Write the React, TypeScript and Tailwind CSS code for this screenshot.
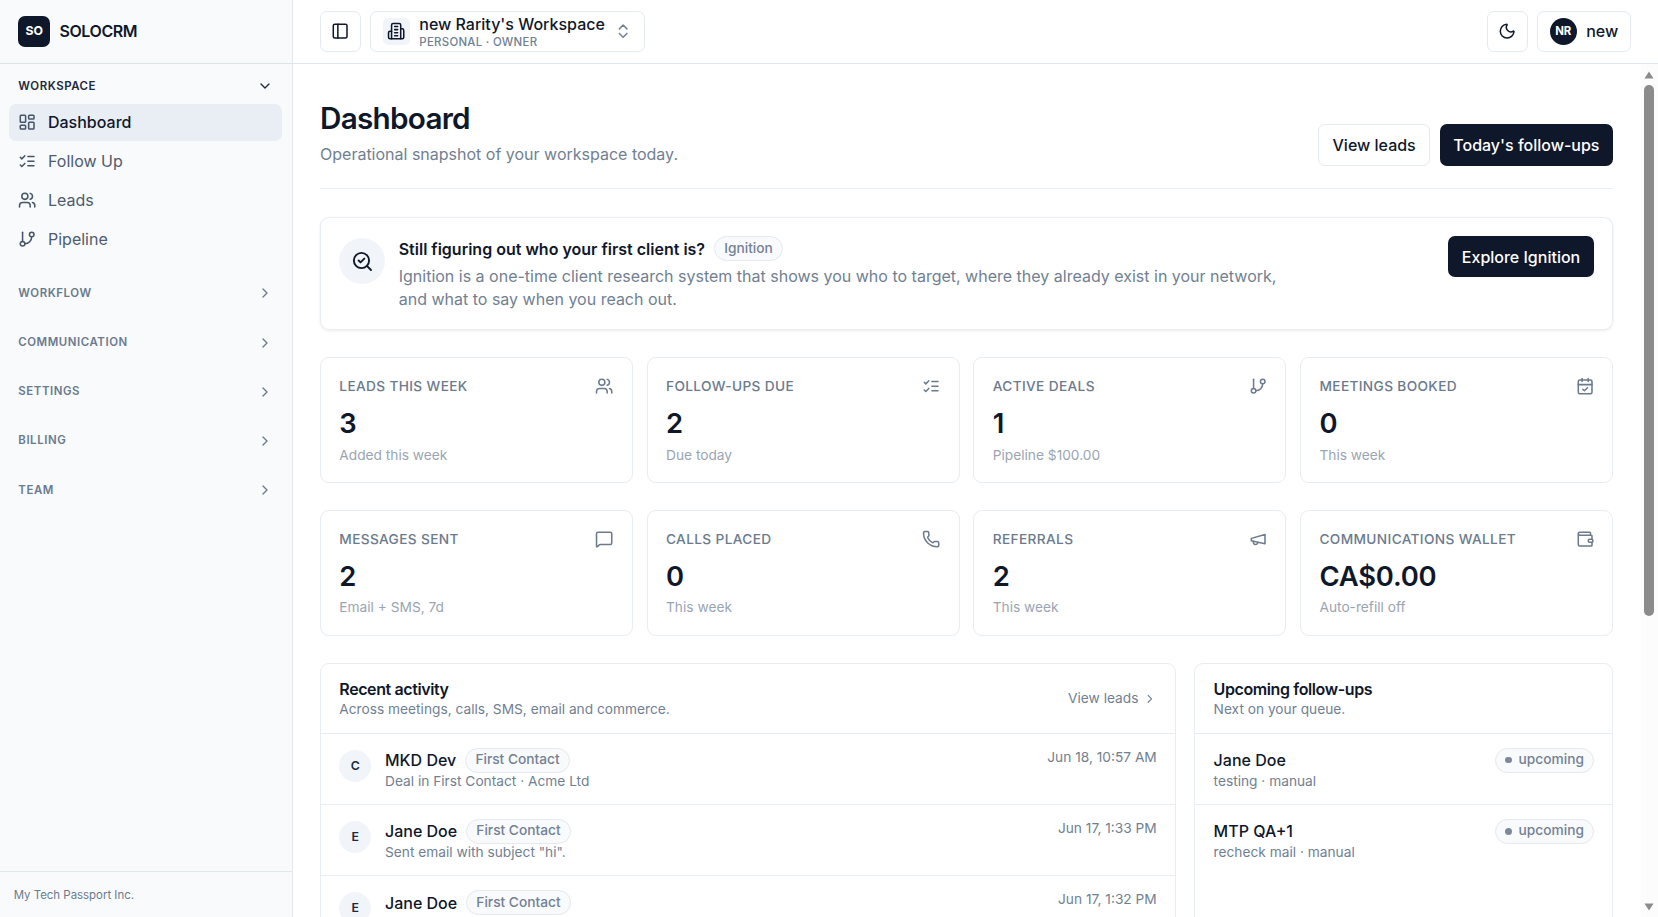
// App.tsx
import React from 'react';
import {
  CalendarCheck,
  ChevronDown,
  ChevronRight,
  ChevronsUpDown,
  GitBranch,
  LayoutDashboard,
  MessageSquare,
  Moon,
  PanelLeft,
  Phone,
  SearchCheck,
  Users,
} from 'lucide-react';

type IconType = React.ComponentType<{ className?: string }>;

interface Stat {
  label: string;
  value: string;
  hint: string;
  icon: IconType;
}

interface Activity {
  initial: string;
  name: string;
  detail: string;
  time: string;
}

const makeIcon = (paths: string[]): IconType => ({ className }) => (
  <svg
    xmlns="http://www.w3.org/2000/svg"
    className={className}
    viewBox="0 0 24 24"
    fill="none"
    stroke="currentColor"
    strokeWidth={2}
    strokeLinecap="round"
    strokeLinejoin="round"
  >
    {paths.map((d) => (
      <path key={d} d={d} />
    ))}
  </svg>
);

const BuildingIcon = makeIcon([
  'M6 22V4a2 2 0 0 1 2-2h8a2 2 0 0 1 2 2v18Z',
  'M6 12H4a2 2 0 0 0-2 2v6a2 2 0 0 0 2 2h2',
  'M18 9h2a2 2 0 0 1 2 2v9a2 2 0 0 1-2 2h-2',
  'M10 6h4',
  'M10 10h4',
  'M10 14h4',
  'M10 18h4',
]);

const ChecklistIcon = makeIcon(['m3 17 2 2 4-4', 'm3 7 2 2 4-4', 'M13 6h8', 'M13 12h8', 'M13 18h8']);

const MegaphoneIcon = makeIcon(['m3 11 18-5v12L3 14v-3z', 'M11.6 16.8a3 3 0 1 1-5.8-1.6']);

const WalletIcon = makeIcon([
  'M19 7V4a1 1 0 0 0-1-1H5a2 2 0 0 0 0 4h15a1 1 0 0 1 1 1v4h-3a2 2 0 0 0 0 4h3a1 1 0 0 0 1-1v-2a1 1 0 0 0-1-1',
  'M3 5v14a2 2 0 0 0 2 2h15a1 1 0 0 0 1-1v-4',
]);

const navItems: { label: string; icon: IconType }[] = [
  { label: 'Dashboard', icon: LayoutDashboard },
  { label: 'Follow Up', icon: ChecklistIcon },
  { label: 'Leads', icon: Users },
  { label: 'Pipeline', icon: GitBranch },
];

const closedSections = ['Workflow', 'Communication', 'Settings', 'Billing', 'Team'];

const stats: Stat[] = [
  { label: 'Leads this week', value: '3', hint: 'Added this week', icon: Users },
  { label: 'Follow-ups due', value: '2', hint: 'Due today', icon: ChecklistIcon },
  { label: 'Active deals', value: '1', hint: 'Pipeline $100.00', icon: GitBranch },
  { label: 'Meetings booked', value: '0', hint: 'This week', icon: CalendarCheck },
  { label: 'Messages sent', value: '2', hint: 'Email + SMS, 7d', icon: MessageSquare },
  { label: 'Calls placed', value: '0', hint: 'This week', icon: Phone },
  { label: 'Referrals', value: '2', hint: 'This week', icon: MegaphoneIcon },
  { label: 'Communications wallet', value: 'CA$0.00', hint: 'Auto-refill off', icon: WalletIcon },
];

const activities: Activity[] = [
  { initial: 'C', name: 'MKD Dev', detail: 'Deal in First Contact · Acme Ltd', time: 'Jun 18, 10:57 AM' },
  { initial: 'E', name: 'Jane Doe', detail: 'Sent email with subject "hi".', time: 'Jun 17, 1:33 PM' },
  { initial: 'E', name: 'Jane Doe', detail: '', time: 'Jun 17, 1:32 PM' },
];

const followUps = [
  { name: 'Jane Doe', detail: 'testing · manual' },
  { name: 'MTP QA+1', detail: 'recheck mail · manual' },
];

const Badge: React.FC<{ dot?: boolean; children: React.ReactNode }> = ({ dot, children }) => (
  <span className="inline-flex h-[25px] shrink-0 items-center gap-1.5 rounded-full border border-[#e4eaf0] bg-[#f8fafc] px-[9px] text-[13.72px] leading-none font-medium text-[#748193]">
    {dot && <span className="size-1.5 rounded-full bg-[#7d8a9c]" />}
    {children}
  </span>
);

const Sidebar: React.FC = () => (
  <aside className="flex w-[292.6px] shrink-0 flex-col border-r border-[#e2e8f0] bg-[#f8fafc]">
    <div className="flex h-14 shrink-0 items-center gap-2 border-b border-[#dbe2ea] px-4">
      <div className="flex size-7 items-center justify-center rounded-[7px] bg-[#0f172a] text-[12.3px] font-bold text-white">
        SO
      </div>
      <span className="text-[16px] font-semibold tracking-tight text-[#0f172a]">SOLOCRM</span>
    </div>

    <nav className="flex flex-1 flex-col px-2 pt-[5.9px]">
      <button className="flex h-7 items-center justify-between px-2 text-[#1e293b]">
        <span className="pt-px text-[11.43px] font-semibold tracking-[0.57px] uppercase">Workspace</span>
        <ChevronDown className="size-3.5" />
      </button>
      <div className="mt-0.5 flex flex-col gap-0.5">
        {navItems.map(({ label, icon: Icon }, i) => (
          <a
            key={label}
            className={`flex h-8 items-center gap-2.5 rounded-[7px] px-2 text-[16px] ${
              i === 0 ? 'bg-[#e9eef5] font-medium text-[#0f172a]' : 'text-[#4f5c6e]'
            }`}
          >
            <Icon className="size-4 text-[#475569]" />
            {label}
          </a>
        ))}
      </div>
      <div className="mt-[20.2px] flex flex-col gap-[17.2px]">
        {closedSections.map((label) => (
          <button key={label} className="flex h-7 items-center justify-between px-2 text-[#6b7a8d]">
            <span className="text-[11.43px] font-semibold tracking-[0.57px] uppercase">{label}</span>
            <ChevronRight className="size-3.5" />
          </button>
        ))}
      </div>
    </nav>

    <div className="border-t border-[#e2e8f0] px-3 pt-[13.5px] pb-[13.5px] text-[11.43px] leading-[18px] text-[#6b7a8d]">
      My Tech Passport Inc.
    </div>
  </aside>
);

const Topbar: React.FC = () => (
  <header className="flex h-14 shrink-0 items-center justify-between border-b border-[#dfe6ec] px-6">
    <div className="flex items-center gap-2">
      <button className="flex size-9 items-center justify-center rounded-[7px] border border-[#e4eaf0]">
        <PanelLeft className="size-4" />
      </button>
      <button className="flex h-9 items-center gap-2 rounded-[7px] border border-[#e4eaf0] px-2.5">
        <span className="flex size-6 items-center justify-center rounded-[5px] bg-[#f1f5f9]">
          <BuildingIcon className="size-4" />
        </span>
        <span className="flex flex-col pt-[2px] text-left">
          <span className="text-[16px] leading-[20px] font-medium">new Rarity's Workspace</span>
          <span className="text-[11.4px] leading-[17px] font-medium tracking-[0.3px] text-[#717f92] uppercase">
            Personal · Owner
          </span>
        </span>
        <ChevronsUpDown className="size-4 text-[#748193]" />
      </button>
    </div>
    <div className="flex items-center gap-2">
      <button className="flex size-9 items-center justify-center rounded-[7px] border border-[#e4eaf0]">
        <Moon className="size-4" />
      </button>
      <button className="flex h-9 items-center gap-2 rounded-[7px] border border-[#e4eaf0] px-2.5 text-[16px] font-medium">
        <span className="flex size-6 items-center justify-center rounded-full bg-[#0f172a] text-[11.4px] font-bold text-white">
          NR
        </span>
        new
      </button>
    </div>
  </header>
);

const StatCard: React.FC<{ stat: Stat }> = ({ stat }) => {
  const Icon = stat.icon;
  return (
    <div className="h-[125.5px] rounded-[9px] border border-[#e8edf2] px-4 pt-[17.4px]">
      <div className="flex items-center justify-between text-[#6b7a8d]">
        <span className="text-[13.7px] leading-[20px] font-medium tracking-[0.35px] uppercase">{stat.label}</span>
        <Icon className="size-4" />
      </div>
      <div className="mt-2 text-[27.4px] leading-[36.6px] font-semibold tracking-[-0.2px]">{stat.value}</div>
      <div className="mt-[4px] text-[13.72px] leading-[18.3px] text-[#9aa5b3]">{stat.hint}</div>
    </div>
  );
};

const ScrollBar: React.FC = () => (
  <div className="flex w-[17.4px] shrink-0 flex-col items-center bg-[#fcfcfc] pt-[7px] pb-[6px]">
    <svg className="h-[8px] w-[10px] shrink-0" viewBox="0 0 10 8" fill="#8b8b8b">
      <path d="M5 0.5 9.5 7.5H0.5Z" />
    </svg>
    <div className="mt-[6px] h-[531px] w-[10px] shrink-0 rounded-full bg-[#8b8b8b]" />
    <svg className="mt-auto h-[8px] w-[10px] shrink-0" viewBox="0 0 10 8" fill="#8b8b8b">
      <path d="M5 7.5 0.5 0.5H9.5Z" />
    </svg>
  </div>
);

const App: React.FC = () => {
  return (
    <div className="flex h-screen w-screen overflow-hidden bg-white font-[Inter,sans-serif] text-[#0f172a] [--spacing:4.5714px]">
      <Sidebar />
      <div className="flex min-w-0 flex-1 flex-col">
        <Topbar />
        <div className="flex min-h-0 flex-1">
          <main className="flex min-w-0 flex-1 flex-col gap-6 overflow-hidden px-6 pt-[33.6px]">
            {/* Page heading */}
            <div className="flex shrink-0 items-end justify-between border-b border-[#e8edf2] pb-[22.8px]">
              <div>
                <h1 className="text-[29.7px] leading-[40px] font-semibold tracking-tight">Dashboard</h1>
                <p className="mt-[5px] text-[16px] leading-[23px] text-[#717f92]">
                  Operational snapshot of your workspace today.
                </p>
              </div>
              <div className="flex gap-2">
                <button className="h-9 rounded-[7px] border border-[#e4eaf0] px-3 text-[16px] font-medium">
                  View leads
                </button>
                <button className="h-9 rounded-[7px] bg-[#0f172a] px-3 text-[16px] font-medium text-white">
                  Today's follow-ups
                </button>
              </div>
            </div>

            {/* Ignition banner */}
            <section className="flex h-[113.2px] shrink-0 items-start gap-3 rounded-[9px] border border-[#e8edf2] p-4 shadow-[0_1px_3px_rgba(15,23,42,0.08)]">
              <div className="mt-0.5 flex size-10 shrink-0 items-center justify-center rounded-full bg-[#f1f5f9]">
                <SearchCheck className="size-5" />
              </div>
              <div className="flex-1">
                <div className="flex items-center gap-2">
                  <h2 className="text-[16px] leading-[24px] font-semibold">Still figuring out who your first client is?</h2>
                  <Badge>Ignition</Badge>
                </div>
                <p className="mt-[4px] max-w-[900px] text-[16px] leading-[22.86px] text-[#717f92]">
                  Ignition is a one-time client research system that shows you who to target, where they already exist
                  in your network, and what to say when you reach out.
                </p>
              </div>
              <button className="h-9 rounded-[7px] bg-[#0f172a] px-3 text-[16px] font-medium text-white">
                Explore Ignition
              </button>
            </section>

            <section className="grid shrink-0 grid-cols-4 gap-x-3 gap-y-6">
              {stats.map((stat) => (
                <StatCard key={stat.label} stat={stat} />
              ))}
            </section>

            <section className="grid h-[420px] shrink-0 grid-cols-3 gap-4">
              <div className="col-span-2 rounded-[9px] border border-[#e8edf2]">
                <div className="flex h-[68.6px] items-center justify-between px-4">
                  <div>
                    <h3 className="text-[16px] leading-[22px] font-semibold tracking-tight">Recent activity</h3>
                    <p className="text-[13.72px] leading-[18.3px] text-[#717f92]">
                      Across meetings, calls, SMS, email and commerce.
                    </p>
                  </div>
                  <a className="flex items-center gap-1 text-[13.72px] text-[#717f92]">
                    View leads
                    <ChevronRight className="size-3" />
                  </a>
                </div>
                {activities.map((item) => (
                  <div key={item.time} className="flex h-[71.3px] items-start gap-3 border-t border-[#e8edf2] px-4 pt-3">
                    <div className="mt-0.5 flex size-7 items-center justify-center rounded-full bg-[#f1f5f9] text-[12.3px] font-semibold text-[#1e293b]">
                      {item.initial}
                    </div>
                    <div className="flex-1">
                      <div className="flex items-center gap-2">
                        <span className="text-[16px] leading-[24px] font-medium">{item.name}</span>
                        <Badge>First Contact</Badge>
                      </div>
                      <p className="-mt-[0.4px] text-[13.72px] leading-[18.3px] text-[#717f92]">{item.detail}</p>
                    </div>
                    <span className="text-[13.72px] leading-[18.3px] text-[#717f92]">{item.time}</span>
                  </div>
                ))}
              </div>

              <div className="rounded-[9px] border border-[#e8edf2]">
                <div className="flex h-[68.6px] items-center px-4">
                  <div>
                    <h3 className="text-[16px] leading-[22px] font-semibold tracking-tight">Upcoming follow-ups</h3>
                    <p className="text-[13.72px] leading-[18.3px] text-[#717f92]">Next on your queue.</p>
                  </div>
                </div>
                {followUps.map((item) => (
                  <div key={item.name} className="flex h-[71.3px] items-start justify-between border-t border-[#e8edf2] px-4 pt-3">
                    <div>
                      <div className="text-[16px] leading-[25px] font-medium">{item.name}</div>
                      <p className="-mt-[0.4px] text-[13.72px] leading-[18.3px] text-[#717f92]">{item.detail}</p>
                    </div>
                    <Badge dot>upcoming</Badge>
                  </div>
                ))}
              </div>
            </section>
          </main>
          <ScrollBar />
        </div>
      </div>
    </div>
  );
};

export default App;
